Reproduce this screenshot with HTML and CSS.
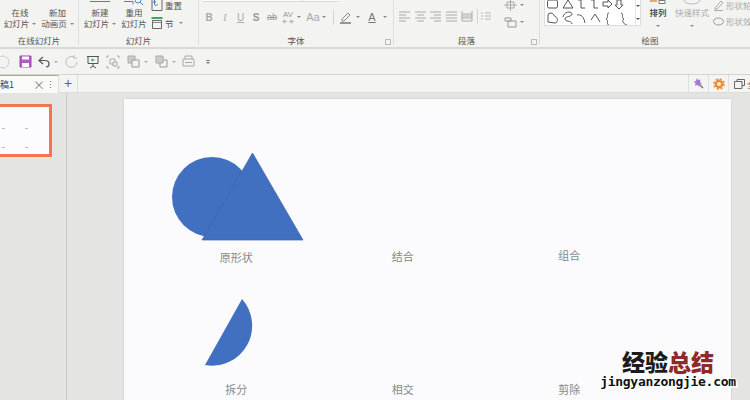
FILE: index.html
```html
<!DOCTYPE html>
<html lang="zh-CN">
<head>
    <meta charset="UTF-8">
    <title>演示文稿1</title>
    <link rel="stylesheet" href="styles.css">
</head>
<body>
    <div class="ribbon">
        <div class="group group-online">
            <div class="tools">
                <div class="tool tool-online">在线<br>幻灯片<i class="caret"></i></div>
                <div class="tool tool-anim">新加<br>动画页<i class="caret"></i></div>
            </div>
            <div class="group-label">在线幻灯片</div>
        </div>
        <div class="group group-slides">
            <div class="tools">
                <div class="tool tool-new">
                    <svg class="tool-ico" width="22" height="6" viewBox="0 0 22 6"><path d="M1 1.500h20" stroke="#777"/></svg>
                    新建<br>幻灯片<i class="caret"></i>
                </div>
                <div class="tool tool-reuse">
                    <svg class="tool-ico" width="22" height="6" viewBox="0 0 22 6"><path d="M1 1.500h9v3" fill="none" stroke="#777"/><circle cx="15" cy="0" r="3" fill="none" stroke="#4a86c0"/><path d="M17 2l3 3" stroke="#4a86c0"/></svg>
                    重用<br>幻灯片
                </div>
                <div class="side-tools">
                    <div class="side-tool">
                        <svg width="12" height="12" viewBox="0 0 12 12"><path d="M1 .5h10v11H1z" fill="none" stroke="#666"/><path d="M5 3H2M3.500 1v4c0 2 3 2 3 0" stroke="#3a78b8" fill="none"/></svg>重置
                    </div>
                    <div class="side-tool">
                        <svg width="12" height="12" viewBox="0 0 12 12"><path d="M.5 1h11" stroke="#3fa564" stroke-width="2"/><path d="M1.500 3.500h9v8h-9z" fill="none" stroke="#666"/><path d="M1.500 5.500h9" stroke="#888"/></svg>节<i class="caret"></i>
                    </div>
                </div>
            </div>
            <div class="group-label">幻灯片</div>
        </div>
        <div class="group group-font">
            <div class="font-boxes"><span class="font-box font-box-name"></span><span class="font-box font-box-size"></span></div>
            <div class="font-row">
                <b class="fmt fmt-b">B</b><span class="fmt fmt-i">I</span><span class="fmt fmt-u">U</span><b class="fmt fmt-s">S</b><span class="fmt fmt-ab">ab</span>
                <span class="fmt fmt-av">AV
                    <svg class="av-arrows" width="12" height="5" viewBox="0 0 12 5"><path d="M3 .5L1 2.500l2 2M1 2.500h4M9 .5l2 2-2 2M11 2.500H7" fill="none" stroke="#aaa"/></svg>
                </span>
                <i class="caret caret-av"></i>
                <span class="fmt fmt-aa">Aa</span>
                <i class="caret caret-aa"></i>
                <span class="vsep"></span>
                <svg class="fmt-pen" width="14" height="13" viewBox="0 0 14 13"><path d="M3 8l6-6 2 2-6 6H3z" fill="none" stroke="#888"/><path d="M1 12h11" stroke="#777" stroke-width="1.500"/></svg>
                <i class="caret caret-pen"></i>
                <span class="fmt fmt-color">A</span>
                <i class="caret caret-color"></i>
            </div>
            <div class="group-label">字体</div>
            <i class="launcher"></i>
        </div>
        <div class="group group-para">
            <div class="para-wrap">
                <div class="para-row">
                    <svg width="12" height="11" viewBox="0 0 12 11"><path d="M0 1h11M0 4h7M0 7h11M0 10h7" stroke="#aaa"/></svg>
                    <svg width="12" height="11" viewBox="0 0 12 11"><path d="M0 1h11M2 4h7M0 7h11M2 10h7" stroke="#aaa"/></svg>
                    <svg width="12" height="11" viewBox="0 0 12 11"><path d="M0 1h11M4 4h7M0 7h11M4 10h7" stroke="#aaa"/></svg>
                    <svg width="12" height="11" viewBox="0 0 12 11"><path d="M0 1h11M0 4h11M0 7h11M0 10h11" stroke="#aaa"/></svg>
                    <svg width="12" height="12" viewBox="0 0 12 12"><path d="M1 1v10h10V1M1 4h10M1 6h10M1 8h10" fill="none" stroke="#aaa"/></svg>
                    <span class="vsep"></span>
                    <svg width="10" height="8" viewBox="0 0 10 8"><path d="M0 1h2M4 1h6M0 4h2M4 4h6M0 7h2M4 7h6" stroke="#bbb"/></svg>
                </div>
                <div class="para-side">
                    <div class="para-side-tool"><svg width="13" height="12" viewBox="0 0 13 12"><path d="M3 3h7v6H3zM6.500 0v12M0 6h13" fill="none" stroke="#aaa"/></svg><i class="caret"></i></div>
                    <div class="para-side-tool"><svg width="13" height="11" viewBox="0 0 13 11"><path d="M1 1h6v3H1zM4 4h8v6H4z" fill="none" stroke="#999"/></svg><i class="caret"></i></div>
                </div>
            </div>
            <div class="group-label">段落</div>
            <i class="launcher"></i>
        </div>
        <div class="group group-draw">
            <div class="tools">
                <div class="gallery">
                    <svg width="90" height="26" viewBox="0 0 90 26">
                        <g fill="none" stroke="#555">
                            <rect x="2.500" y="0" width="10" height="8" rx="1.500"/>
                            <path d="M18 8l5-8 5 8z"/>
                            <path d="M33 0h3v8h4M46 0h3v8h4"/>
                            <path d="M58 2h5V0l4 4-4 4V6h-5z"/>
                            <path d="M72 0h4v5h2l-4 4-4-4h2z"/>
                            <path d="M3 22v-7q0-2 3-2c3 0 2 3 5 4 2 1 2 6-1 6z"/>
                            <path d="M18 17c1-6 9-6 9-3s-7 2-7 5 6 1 7 5"/>
                            <path d="M32 15c4-1 7 2 8 8"/>
                            <path d="M46 20l4-6 5 8"/>
                            <path d="M64 13c-3 0 0 5-3 6 3 1 0 6 3 6"/>
                            <path d="M76 13c3 0 0 5 3 6-3 1 0 6 3 6"/>
                        </g>
                    </svg>
                    <div class="gallery-scroll"><i class="caret"></i><i class="caret"></i></div>
                </div>
                <div class="tool tool-arrange">
                    <svg class="tool-ico" width="18" height="6" viewBox="0 0 18 6"><path d="M1 1h7" stroke="#ef8b35" stroke-width="1.500"/><path d="M10 .5h6v3h-6z" fill="#fff" stroke="#777"/></svg>
                    <span class="arrange-name">排列</span><i class="caret caret-below"></i>
                </div>
                <div class="tool tool-quick">
                    <svg class="tool-ico" width="22" height="6" viewBox="0 0 22 6"><ellipse cx="11" cy="0" rx="8" ry="4" fill="none" stroke="#bbb"/></svg>
                    快速样式<i class="caret caret-below"></i>
                </div>
                <div class="shape-opts">
                    <div class="shape-opt">
                        <svg width="11" height="11" viewBox="0 0 11 11"><path d="M2 8l6-7 2 2-6 6H2zM1 10.500h9" fill="none" stroke="#aaa"/></svg>形状轮廓
                    </div>
                    <div class="shape-opt">
                        <svg width="11" height="11" viewBox="0 0 11 11"><ellipse cx="5.500" cy="5.500" rx="5" ry="3.500" fill="none" stroke="#999"/></svg>形状效果
                    </div>
                </div>
            </div>
            <div class="group-label">绘图</div>
        </div>
    </div>

    <div class="qat">
        <svg class="qat-icon" width="12" height="14" viewBox="0 0 12 14"><circle cx="3" cy="7" r="6" fill="none" stroke="#ccc"/></svg>
        <svg class="qat-save" width="13" height="13" viewBox="0 0 13 13"><path d="M1 1h11v11H1z" fill="#b05cc0" stroke="#9c46ad"/><path d="M3 1.500h7v3H3zM3 8h7v4H3z" fill="#fff"/></svg>
        <svg class="qat-undo" width="12" height="12" viewBox="0 0 12 12"><path d="M5 1L1 4.500 5 8M1 4.500h6c3 0 4 2 4 3.500s-1 3-3 3" fill="none" stroke="#555" stroke-width="1.200"/></svg><i class="caret"></i>
        <svg class="qat-redo" width="13" height="13" viewBox="0 0 13 13"><path d="M9 2a5.500 5.500 0 1 0 3 5M9 0v3h3" fill="none" stroke="#bbb"/></svg>
        <svg class="qat-play" width="14" height="14" viewBox="0 0 14 14"><path d="M1 1.500h12M2 1.500v7h10v-7M7 8.500V11M4 13l3-2 3 2" fill="none" stroke="#555"/><path d="M5.500 3.500l3.500 1.500-3.500 1.500z" fill="#3fa564"/></svg>
        <svg class="qat-select" width="14" height="14" viewBox="0 0 14 14"><path d="M1 3V1h2M11 1h2v2M13 11v2h-2M3 13H1v-2" fill="none" stroke="#aaa"/><path d="M4 4h5v5H4z" fill="none" stroke="#aaa"/><path d="M7 7h4v4H7z" fill="#eee" stroke="#aaa"/></svg>
        <svg class="qat-front" width="13" height="13" viewBox="0 0 13 13"><path d="M1 1h7v7H1z" fill="#ccc" stroke="#aaa"/><path d="M5 5h7v7H5z" fill="#f3f3f1" stroke="#999"/></svg><i class="caret"></i>
        <svg class="qat-back" width="13" height="13" viewBox="0 0 13 13"><path d="M5 5h7v7H5z" fill="#f3f3f1" stroke="#999"/><path d="M1 1h7v7H1z" fill="#ccc" stroke="#aaa"/></svg><i class="caret"></i>
        <svg class="qat-print" width="13" height="13" viewBox="0 0 13 13"><path d="M3 4V1h7v3M1 4h11v7H1z" fill="none" stroke="#aaa"/><path d="M3 7h7v1H3z" fill="#aaa"/></svg>
        <span class="qat-more"><i class="qat-more-line"></i><i class="caret"></i></span>
    </div>

    <div class="tabbar">
        <div class="tab"><span class="tab-name">稿1</span><span class="tab-close">×</span><span class="tab-menu">⋮</span></div>
        <div class="tab-add">+</div>
        <div class="tabbar-right">
            <div class="tab-tool"><svg width="13" height="13" viewBox="0 0 13 13"><path d="M11 11L7 7" stroke="#777" stroke-width="1.500"/><path d="M5 1l1.200 2 2.300-.5L8 5l2 1.500-2.500.5-.5 2.500L5.500 8 3 8.500 3.500 6 1.500 4.500 4 4z" fill="#a57ad0"/></svg></div>
            <div class="tab-tool"><svg width="12" height="12" viewBox="0 0 12 12"><circle cx="6" cy="6" r="3.200" fill="none" stroke="#ef8b35" stroke-width="2.400"/><circle cx="6" cy="6" r="5" fill="none" stroke="#ef8b35" stroke-width="1.600" stroke-dasharray="2 1.930"/></svg></div>
            <div class="tab-tool tab-tool-last"><svg width="11" height="10" viewBox="0 0 11 10"><path d="M3 2V.5h7.500v6H8M.5 2.500H8v7H.5z" fill="#f3f3f1" stroke="#666"/></svg><span class="tab-tool-text">全</span></div>
        </div>
    </div>

    <div class="main">
        <div class="side">
            <div class="thumb">
                <span class="thumb-dot"></span><span class="thumb-dot"></span>
                <span class="thumb-dot"></span><span class="thumb-dot"></span>
            </div>
        </div>
        <div class="stage">
            <div class="slide">
                <div class="cell">
                    <svg class="shape" width="166" height="100" viewBox="0 0 166 100">
                        <circle cx="59" cy="48" r="40" fill="#4170c0"/>
                        <path d="M99.500 4L150 91H49z" fill="#4170c0" stroke="#3a64ab" stroke-width=".7"/>
                    </svg>
                    <div class="cell-label">原形状</div>
                </div>
                <div class="cell">
                    <div class="shape"></div>
                    <div class="cell-label label-up1">结合</div>
                </div>
                <div class="cell">
                    <div class="shape"></div>
                    <div class="cell-label label-up2">组合</div>
                </div>
                <div class="cell">
                    <svg class="shape" width="166" height="100" viewBox="0 0 166 100">
                        <path d="M89 18A40 40 0 0 1 52 84z" fill="#4170c0"/>
                    </svg>
                    <div class="cell-label">拆分</div>
                </div>
                <div class="cell">
                    <div class="shape"></div>
                    <div class="cell-label">相交</div>
                </div>
                <div class="cell">
                    <div class="shape"></div>
                    <div class="cell-label">剪除</div>
                </div>
            </div>
        </div>
    </div>

    <div class="watermark">
        <div class="wm-title">经验<span class="wm-red">总结</span></div>
        <div class="wm-url">jingyanzongjie.com</div>
    </div>
</body>
</html>
```

FILE: styles.css
```css
html, body {
    margin: 0;
    height: 400px;
    overflow: hidden;
}
body {
    position: relative;
    font-family: "Noto Sans CJK SC", "Liberation Sans", sans-serif;
    font-size: 8.500px;
    color: #555;
    background-color: #e4e4e3;
}
.caret {
    display: inline-block;
    width: 0;
    height: 0;
    margin-left: 3px;
    border-left: 2px solid transparent;
    border-right: 2px solid transparent;
    border-top: 2px solid #888;
    vertical-align: middle;
}
.caret-below {
    display: block;
    margin: 8px auto 0;
}
.vsep {
    width: 1px;
    height: 15px;
    background-color: #d4d4d2;
}

/* ribbon */
.ribbon {
    display: flex;
    height: 47px;
    background-color: #f3f3f1;
    border-bottom: 2px solid #dbd8d3;
    overflow: hidden;
}
.group {
    position: relative;
    box-sizing: border-box;
    height: 45px;
    border-right: 1px solid #dedede;
    flex-shrink: 0;
}
.group-online { width: 79px; }
.group-slides { width: 120px; }
.group-font { width: 195px; }
.group-para { width: 146px; }
.group-draw { flex: 1; border-right: none; }
.group-label {
    position: absolute;
    left: 0;
    right: 0;
    top: 34px;
    line-height: 12px;
    text-align: center;
    color: #555;
}
.launcher {
    position: absolute;
    right: 2px;
    top: 39px;
    width: 4px;
    height: 4px;
    border: 1px solid #bbb;
}
.tools {
    display: flex;
}
.tool {
    padding-top: 7px;
    line-height: 10.500px;
    text-align: center;
    white-space: nowrap;
}
.tool-ico {
    display: block;
    height: 6px;
    margin: -7px auto 1px;
}
.tool-online { width: 38px; margin-left: 1px; }
.tool-anim { width: 37px; }
.tool-new { width: 38px; margin-left: 2px; }
.tool-reuse { width: 30px; }
.side-tools {
    margin-left: 2px;
    display: flex;
    flex-direction: column;
    gap: 6px;
    margin-top: -1px;
}
.side-tool {
    display: flex;
    align-items: center;
    gap: 2px;
    height: 12px;
    line-height: 12px;
}

/* font group */
.font-boxes {
    display: flex;
    height: 2px;
    margin-left: 4px;
}
.font-box {
    display: block;
    height: 1px;
    background-color: #fff;
    border-bottom: 1px solid #d8d8d8;
}
.font-box-name { width: 99px; }
.font-box-size { width: 35px; border-left: 1px solid #d8d8d8; }
.font-row {
    display: flex;
    align-items: center;
    height: 16px;
    margin-top: 7px;
    margin-left: 2px;
    color: #aaa;
}
.font-row .caret { flex-shrink: 0; }
.fmt {
    display: block;
    flex-shrink: 0;
    font-family: "Liberation Sans", sans-serif;
    font-size: 10px;
    text-align: center;
}
.fmt-b { width: 16px; }
.fmt-i { width: 16px; font-style: italic; font-family: "Liberation Serif", serif; }
.fmt-u { width: 15px; text-decoration: underline; }
.fmt-s { width: 16px; color: #999; }
.fmt-ab { width: 16px; font-size: 9px; text-decoration: line-through; color: #999; }
.fmt-av {
    width: 16px;
    font-size: 8px;
    line-height: 8px;
    color: #999;
}
.av-arrows {
    display: block;
    margin: 0 auto;
}
.caret-av { margin-left: 1px; }
.fmt-aa { width: 18px; margin-left: 3px; font-size: 11px; }
.caret-aa { margin-left: 0; }
.font-row .vsep { margin-left: 7px; }
.fmt-pen { margin-left: 5px; }
.caret-pen { margin-left: 3px; }
.fmt-color {
    width: 14px;
    margin-left: 5px;
    font-size: 11px;
    color: #777;
    text-decoration: underline;
}
.caret-color { margin-left: 4px; }

/* paragraph group */
.para-wrap {
    display: flex;
}
.para-row {
    display: flex;
    align-items: center;
    gap: 3.500px;
    height: 16px;
    margin-top: 8px;
    margin-left: 5px;
}
.para-side {
    margin-left: 13px;
    margin-top: -1px;
    display: flex;
    flex-direction: column;
    gap: 5px;
}
.para-side-tool {
    height: 12px;
    display: flex;
    align-items: center;
}

/* drawing group */
.gallery {
    display: flex;
    box-sizing: border-box;
    width: 97px;
    height: 26px;
    margin-left: 4px;
    background-color: #fff;
    border: 1px solid #dedede;
    border-top: none;
    overflow: hidden;
}
.gallery-scroll {
    flex: 1;
    display: flex;
    flex-direction: column;
    justify-content: space-around;
    align-items: center;
    border-left: 1px solid #e4e4e4;
}
.gallery-scroll .caret {
    margin: 0;
    border-top-color: #555;
}
.tool-arrange {
    width: 32px;
    margin-left: 1px;
}
.arrange-name {
    font-weight: 500;
    color: #333;
}
.tool-arrange .caret-below { margin-top: 7px; }
.tool-quick {
    width: 36px;
    color: #aaa;
}
.tool-quick .caret-below { margin-top: 7px; }
.shape-opts {
    margin-left: 3px;
    margin-top: -1px;
    display: flex;
    flex-direction: column;
    gap: 4px;
    color: #aaa;
    white-space: nowrap;
}
.shape-opt {
    display: flex;
    align-items: center;
    gap: 2px;
    height: 12px;
}

/* quick access bar */
.qat {
    display: flex;
    align-items: center;
    box-sizing: border-box;
    height: 26px;
    background-color: #f3f3f1;
    border-bottom: 1px solid #d6d4d0;
}
.qat .caret { margin-left: 4px; border-top-color: #aaa; }
.qat-save { margin-left: 7px; }
.qat-undo { margin-left: 6px; }
.qat-redo { margin-left: 7px; }
.qat-play { margin-left: 8px; }
.qat-select { margin-left: 6px; }
.qat-front { margin-left: 7px; }
.qat-back { margin-left: 6.500px; }
.qat-print { margin-left: 6.500px; }
.qat-more {
    margin-left: 11px;
    display: flex;
    flex-direction: column;
    align-items: center;
    gap: 1px;
}
.qat-more-line {
    width: 4px;
    height: 1px;
    background-color: #888;
}
.qat-more .caret { margin-left: 0; border-top-color: #777; }

/* tab bar */
.tabbar {
    display: flex;
    height: 18px;
    background-color: #f4f4f2;
    border-bottom: 1px solid #dcdcda;
    box-sizing: border-box;
}
.tab {
    display: flex;
    align-items: center;
    box-sizing: border-box;
    width: 59px;
    height: 18px;
    border-top: 1px solid #e8906c;
    border-right: 1px solid #ddd;
    background-color: #fafaf9;
    font-size: 9px;
    white-space: nowrap;
}
.tab-name { width: 33px; color: #444; }
.tab-close { width: 12px; text-align: center; font-size: 12px; color: #888; }
.tab-menu { width: 10px; text-align: center; color: #666; }
.tab-add {
    width: 18px;
    border-right: 1px solid #ddd;
    text-align: center;
    font-family: "Liberation Sans", sans-serif;
    font-size: 14px;
    line-height: 17px;
    color: #666;
}
.tabbar-right {
    display: flex;
    margin-left: auto;
}
.tab-tool {
    display: flex;
    align-items: center;
    justify-content: center;
    width: 19px;
    border-left: 1px solid #dfdfdd;
}
.tab-tool-last {
    width: 22px;
    justify-content: flex-start;
    padding-left: 5px;
    box-sizing: border-box;
    gap: 2px;
    overflow: hidden;
}
.tab-tool-last svg { flex-shrink: 0; }
.tab-tool-text { white-space: nowrap; }

/* workspace */
.main {
    display: flex;
    height: 307px;
}
.side {
    box-sizing: border-box;
    width: 67px;
    border-right: 1px solid #c9c9c9;
    padding-top: 11px;
}
.thumb {
    box-sizing: border-box;
    display: grid;
    grid-template-columns: 23px 23px;
    grid-template-rows: 19px 19px;
    align-content: start;
    justify-content: start;
    width: 52px;
    height: 53px;
    padding: 21px 0 0 1px;
    background-color: #fcfcfe;
    border: 3px solid #f47350;
    border-left: none;
}
.thumb-dot {
    display: block;
    width: 3px;
    height: 1px;
    margin-left: 1px;
    background-color: #bbb;
}
.stage {
    flex: 1;
    padding: 6px 0 0 57px;
}
.slide {
    box-sizing: border-box;
    display: grid;
    grid-template-columns: repeat(3, 166.500px);
    grid-auto-rows: 132px;
    width: 607px;
    height: 320px;
    padding: 50px 0 0 29px;
    background-color: #fbfbfe;
    box-shadow: 0 0 2px rgba(0, 0, 0, 0.15);
}
.shape {
    display: block;
    height: 100px;
}
.cell-label {
    height: 16px;
    line-height: 16px;
    text-align: center;
    font-size: 11px;
    color: #888;
}
.label-up1 { margin-top: -1px; }
.label-up2 { margin-top: -2px; }

/* watermark over the slide */
.watermark {
    position: absolute;
    left: 594px;
    top: 348px;
    width: 148px;
    text-align: center;
}
.wm-title {
    font-size: 23px;
    line-height: 27px;
    font-weight: 900;
    color: #1c1c1c;
}
.wm-red {
    color: #8e2a2a;
}
.wm-url {
    font-family: "DejaVu Sans Mono", monospace;
    font-size: 13px;
    line-height: 14px;
    font-weight: bold;
    color: #111;
    white-space: nowrap;
    text-shadow: 1px 0 #fff, -1px 0 #fff, 0 1px #fff, 0 -1px #fff, 2px 2px #fff;
    letter-spacing: -0.3px;
}
```
